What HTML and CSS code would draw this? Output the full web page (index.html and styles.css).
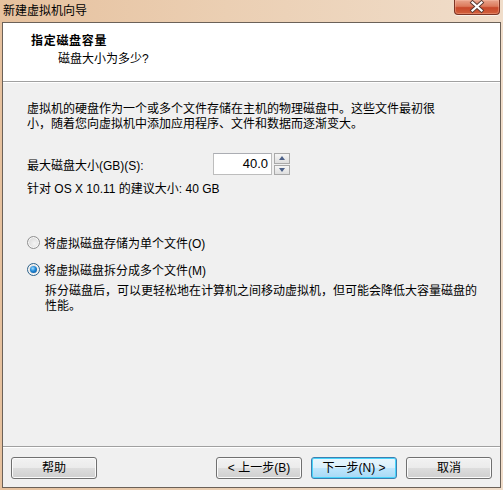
FILE: index.html
```html
<!DOCTYPE html>
<html lang="zh-CN">
<head>
<meta charset="utf-8">
<title>新建虚拟机向导</title>
<link rel="stylesheet" href="styles.css">
</head>
<body>
<div class="window">
  <div class="titlebar">
    <span class="title">新建虚拟机向导</span>
    <span class="close">
      <svg width="46" height="15" viewBox="0 0 46 15">
        <path d="M18.5 3.5 L27.5 11.5 M27.5 3.5 L18.5 11.5" stroke="#5a3a32" stroke-width="4" stroke-linecap="square" fill="none"/>
        <path d="M18.5 3.5 L27.5 11.5 M27.5 3.5 L18.5 11.5" stroke="#ffffff" stroke-width="2.2" stroke-linecap="square" fill="none"/>
      </svg>
    </span>
  </div>
  <div class="client">
    <div class="header">
      <div class="h-title">指定磁盘容量</div>
      <div class="h-sub">磁盘大小为多少?</div>
    </div>
    <div class="body">
      <p class="intro">虚拟机的硬盘作为一个或多个文件存储在主机的物理磁盘中。这些文件最初很<br>小，随着您向虚拟机中添加应用程序、文件和数据而逐渐变大。</p>
      <div class="size-row">
        <span class="size-label">最大磁盘大小(GB)(S):</span>
        <span class="spin-input">40.0</span>
        <span class="spin-btns">
          <span class="spin up"><span class="tri-up"></span></span>
          <span class="spin down"><span class="tri-down"></span></span>
        </span>
      </div>
      <div class="hint">针对 OS X 10.11 的建议大小: 40 GB</div>
      <div class="radio-row first">
        <span class="radio"></span>
        <span>将虚拟磁盘存储为单个文件(O)</span>
      </div>
      <div class="radio-row second">
        <span class="radio checked"><span class="dot"></span></span>
        <span>将虚拟磁盘拆分成多个文件(M)</span>
      </div>
      <p class="desc">拆分磁盘后，可以更轻松地在计算机之间移动虚拟机，但可能会降低大容量磁盘的<br>性能。</p>
    </div>
    <div class="footer">
      <button class="btn">帮助</button>
      <span class="spacer"></span>
      <button class="btn">&lt; 上一步(B)</button>
      <button class="btn default">下一步(N) &gt;</button>
      <button class="btn">取消</button>
    </div>
  </div>
</div>
</body>
</html>
```
FILE: styles.css
```css
* { box-sizing: border-box; }
html, body { margin: 0; padding: 0; }
body {
  width: 503px;
  height: 490px;
  font-family: "Liberation Sans", "Noto Sans CJK SC", sans-serif;
  font-size: 12px;
  color: #000;
}
.window {
  width: 503px;
  height: 490px;
  display: flex;
  flex-direction: column;
  background: linear-gradient(90deg, #e6c19e 0%, #ebcfb3 45%, #f0ddca 100%);
}
.titlebar {
  height: 22px;
  display: flex;
  justify-content: space-between;
  align-items: flex-start;
  flex: none;
}
.title {
  padding-left: 3px;
  line-height: 22px;
  height: 22px;
  color: #000;
}
.close {
  width: 46px;
  height: 15px;
  margin-right: 3px;
  border: 1px solid #7c3424;
  border-top: none;
  border-radius: 0 0 4px 4px;
  background: linear-gradient(180deg, #e9a48c 0%, #dc7a5c 45%, #c8482a 55%, #d2603c 100%);
  box-shadow: 0 1px 0 rgba(255,255,255,0.6), inset 0 0 0 1px rgba(255,200,180,0.35);
  display: block;
  overflow: hidden;
}
.close svg { display: block; margin: -1px 0 0 -1px; }
.client {
  flex: 1;
  margin: 0 2px 2px 2px;
  border: 1px solid #6b6158;
  background: #f0f0f0;
  display: flex;
  flex-direction: column;
}
.header {
  height: 59px;
  flex: none;
  background: #fff;
  border-bottom: 1px solid #a0a0a0;
  padding: 10px 0 0 28px;
}
.h-title {
  font-weight: bold;
  line-height: 16px;
  letter-spacing: 0.7px;
}
.h-sub {
  line-height: 16px;
  margin-top: 2px;
  padding-left: 27px;
}
.body {
  flex: 1;
  border-top: 1px solid #fff;
  padding: 19px 0 0 24px;
}
.intro {
  margin: 0;
  line-height: 15px;
  white-space: nowrap;
}
.size-row {
  display: flex;
  align-items: center;
  height: 22px;
  margin-top: 21px;
}
.size-label {
  width: 186px;
  padding-top: 1px;
}
.spin-input {
  width: 59px;
  height: 22px;
  border: 1px solid #bdbdbd;
  border-top-color: #abadb3;
  background: #fff;
  text-align: right;
  padding-right: 3px;
  line-height: 20px;
  font-size: 13px;
}
.spin-btns {
  width: 16px;
  height: 22px;
  margin-left: 2px;
  display: flex;
  flex-direction: column;
  gap: 1px;
}
.spin {
  flex: 1;
  border: 1px solid #a9a9a9;
  background: linear-gradient(180deg, #f6f6f6, #dedede);
  display: flex;
  align-items: center;
  justify-content: center;
}
.tri-up {
  width: 0; height: 0;
  border-left: 3.5px solid transparent;
  border-right: 3.5px solid transparent;
  border-bottom: 4px solid #4c6088;
}
.tri-down {
  width: 0; height: 0;
  border-left: 3.5px solid transparent;
  border-right: 3.5px solid transparent;
  border-top: 4px solid #4c6088;
}
.hint {
  margin-top: 6px;
  line-height: 16px;
}
.radio-row {
  display: flex;
  align-items: center;
  gap: 4px;
  height: 16px;
}
.radio-row.first { margin-top: 37px; }
.radio-row.second { margin-top: 11px; }
.radio {
  width: 13px;
  height: 13px;
  border-radius: 50%;
  border: 1px solid #8f8f8f;
  background: radial-gradient(circle at 60% 60%, #f4f4f4 0%, #dcdcdc 70%, #cfcfcf 100%);
  box-shadow: inset 0 0 0 1px #f8f8f8;
  display: flex;
  align-items: center;
  justify-content: center;
  flex: none;
}
.radio.checked {
  border-color: #2c628b;
}
.dot {
  width: 7px;
  height: 7px;
  border-radius: 50%;
  background: radial-gradient(circle at 40% 35%, #9fdcff 0%, #1d86d6 45%, #0b4a8a 100%);
}
.desc {
  margin: 7px 0 0 18px;
  line-height: 15px;
  white-space: nowrap;
}
.footer {
  height: 41px;
  flex: none;
  border-top: 1px solid #a0a0a0;
  box-shadow: inset 0 1px 0 #fff;
  display: flex;
  align-items: flex-start;
  padding: 10px 8px 0 8px;
  gap: 9px;
}
.spacer { flex: 1; }
.btn {
  width: 86px;
  height: 22px;
  font-family: "Liberation Sans", "Noto Sans CJK SC", sans-serif;
  font-size: 12px;
  color: #000;
  border: 1px solid #707070;
  border-radius: 3px;
  background: linear-gradient(180deg, #f2f2f2 0%, #ebebeb 50%, #dddddd 51%, #cfcfcf 100%);
  box-shadow: inset 0 0 0 1px #fbfbfb;
  padding: 0;
  line-height: 20px;
}
.btn.default {
  border-color: #3c7fb1;
  background: linear-gradient(180deg, #eaf6fd 0%, #d9f0fc 50%, #bee6fd 51%, #a7d9f5 100%);
  box-shadow: inset 0 0 0 1px #48d4fb;
}
```
